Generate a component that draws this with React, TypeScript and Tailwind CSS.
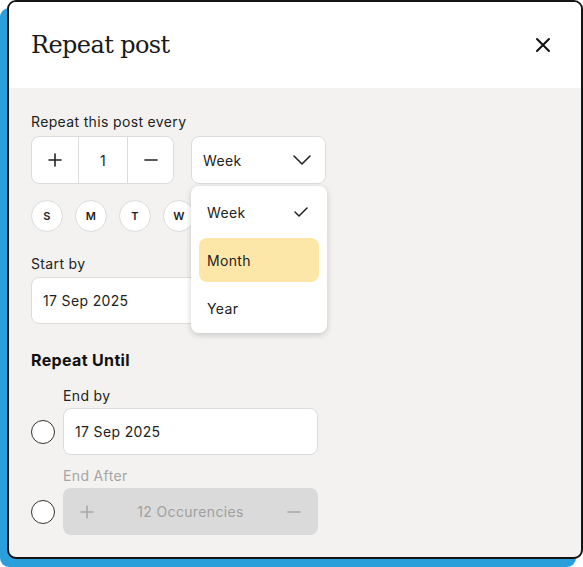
import React from "react";

const sans = { fontFamily: "Inter, 'Noto Sans', sans-serif", letterSpacing: "0.35px" };

function Plus({ c = "#222" }: { c?: string }) {
  return (
    <svg width="16" height="16" viewBox="0 0 16 16" fill="none">
      <path d="M8 2v12M2 8h12" stroke={c} strokeWidth="1.6" strokeLinecap="round" />
    </svg>
  );
}
function Minus({ c = "#222" }: { c?: string }) {
  return (
    <svg width="16" height="16" viewBox="0 0 16 16" fill="none">
      <path d="M2 8h12" stroke={c} strokeWidth="1.6" strokeLinecap="round" />
    </svg>
  );
}

export default function App() {
  return (
    <div className="w-[583px] h-[567px] bg-white relative" style={sans}>
      <div className="ml-[7px] w-[576px] h-[559px] border-2 border-[#141414] rounded-[9px] shadow-[-7px_8px_0_#2a9fda] bg-[#f3f2f0] overflow-hidden flex flex-col">
        <div className="h-[86px] bg-white flex items-center justify-between pl-[22px] pr-[30px] shrink-0">
          <div className="text-[24px] text-[#1a1a1a]" style={{ fontFamily: "'DejaVu Serif', serif", letterSpacing: "-0.6px" }}>
            Repeat post
          </div>
          <svg width="16" height="16" viewBox="0 0 16 16" fill="none">
            <path d="M2 2l12 12M14 2L2 14" stroke="#111" strokeWidth="2" strokeLinecap="round" />
          </svg>
        </div>
        <div className="relative flex-1 px-[22px] pt-[24px]">
          <div className="text-[14px] leading-[20px] text-[#222]">Repeat this post every</div>
          <div className="mt-[4px] flex gap-[17px]">
            <div className="w-[143px] h-[48px] bg-white border border-[#dcdcdc] rounded-[8px] flex">
              <div className="w-[47px] flex items-center justify-center border-r border-[#dcdcdc]"><Plus /></div>
              <div className="w-[49px] flex items-center justify-center border-r border-[#dcdcdc] text-[14px] text-[#222]">1</div>
              <div className="flex-1 flex items-center justify-center"><Minus /></div>
            </div>
            <div className="w-[135px] h-[48px] bg-white border border-[#dcdcdc] rounded-[8px] flex items-center justify-between pl-[11px] pr-[13px]">
              <span className="text-[14px] text-[#222]">Week</span>
              <svg width="20" height="12" viewBox="0 0 20 12" fill="none">
                <path d="M2 2l8 8 8-8" stroke="#222" strokeWidth="1.6" strokeLinecap="round" strokeLinejoin="round" />
              </svg>
            </div>
          </div>
          <div className="mt-[16px] flex gap-[12px]">
            {["S", "M", "T", "W"].map((d) => (
              <div key={d} className="w-[32px] h-[32px] rounded-full bg-white border border-[#dcdcdc] flex items-center justify-center text-[11px] font-semibold text-[#222]">
                {d}
              </div>
            ))}
          </div>
          <div className="mt-[22px] text-[14px] leading-[20px] text-[#222]">Start by</div>
          <div className="mt-[3px] w-[287px] h-[47px] bg-white border border-[#dcdcdc] rounded-[8px] flex items-center pl-[11px] text-[14px] text-[#222]">
            17 Sep 2025
          </div>
          <div className="mt-[24px] text-[16px] leading-[24px] font-bold text-[#111]">Repeat Until</div>
          <div className="mt-[14px] flex flex-col">
            <div className="pl-[32px] text-[14px] leading-[20px] text-[#222]">End by</div>
            <div className="mt-[2px] flex items-center gap-[8px]">
              <div className="w-[24px] h-[24px] rounded-full border border-[#333] bg-white" />
              <div className="w-[255px] h-[47px] bg-white border border-[#dcdcdc] rounded-[8px] flex items-center pl-[11px] text-[14px] text-[#222]">
                17 Sep 2025
              </div>
            </div>
            <div className="mt-[11px] pl-[32px] text-[14px] leading-[20px] text-[#a5a5a5]">End After</div>
            <div className="mt-[2px] flex items-center gap-[8px]">
              <div className="w-[24px] h-[24px] rounded-full border border-[#333] bg-white" />
              <div className="w-[255px] h-[47px] bg-[#dadada] rounded-[8px] flex items-center justify-between px-[16px] text-[14px] text-[#a0a0a0]">
                <Plus c="#a8a8a8" />
                <span>12 Occurencies</span>
                <Minus c="#a8a8a8" />
              </div>
            </div>
          </div>

          <div className="absolute left-[182px] top-[98px] w-[136px] h-[147px] bg-white rounded-[8px] shadow-[0_2px_6px_rgba(0,0,0,0.18)] px-[8px] pt-[4px] flex flex-col">
            <div className="h-[44px] flex items-center justify-between pl-[8px] pr-[10px] text-[14px] text-[#222]">
              <span>Week</span>
              <svg width="16" height="12" viewBox="0 0 16 12" fill="none">
                <path d="M2 6l4 4 8-8" stroke="#222" strokeWidth="1.5" strokeLinecap="round" strokeLinejoin="round" />
              </svg>
            </div>
            <div className="mt-[4px] h-[44px] flex items-center pl-[8px] rounded-[8px] bg-[#fde7a8] text-[14px] text-[#222]">Month</div>
            <div className="mt-[4px] h-[44px] flex items-center pl-[8px] text-[14px] text-[#222]">Year</div>
          </div>
        </div>
      </div>
    </div>
  );
}
